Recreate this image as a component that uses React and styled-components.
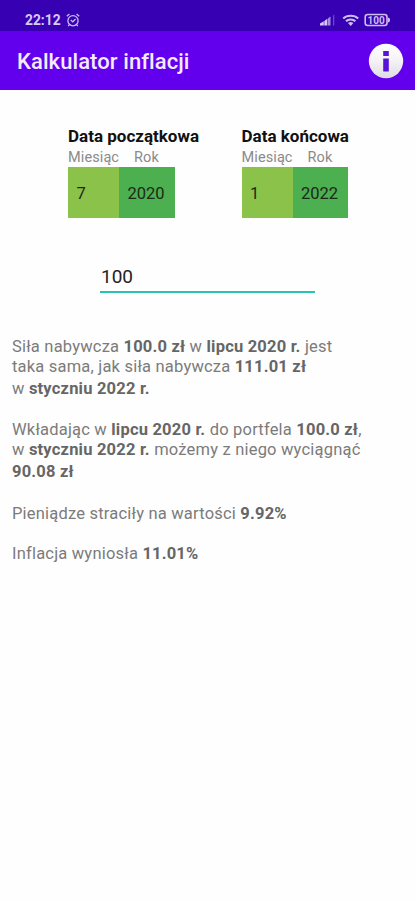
import styled, { createGlobalStyle } from "styled-components";

const App = () => {
  return (
    <Screen>
      <GlobalStyle />
      <StatusBar>
        <Time>22:12</Time>
        <AlarmIcon />
        <Spacer />
        <StatusIcons />
      </StatusBar>
      <Toolbar>
        <Title>Kalkulator inflacji</Title>
        <InfoIcon />
      </Toolbar>
      <Dates>
        <DatePicker title="Data początkowa" month="7" year="2020" />
        <DatePicker title="Data końcowa" month="1" year="2022" />
      </Dates>
      <AmountInput defaultValue="100" />
      <Results>
        <Line>
          Siła nabywcza <b>100.0 zł</b> w <b>lipcu 2020 r.</b> jest
        </Line>
        <Line>
          taka sama, jak siła nabywcza <b>111.01 zł</b>
        </Line>
        <Line $height={23}>
          w <b>styczniu 2022 r.</b>
        </Line>
        <Gap $height={20} />
        <Line>
          Wkładając w <b>lipcu 2020 r.</b> do portfela <b>100.0 zł</b>,
        </Line>
        <Line>
          w <b>styczniu 2022 r.</b> możemy z niego wyciągnąć
        </Line>
        <Line $height={23}>
          <b>90.08 zł</b>
        </Line>
        <Gap $height={21} />
        <Line>
          Pieniądze straciły na wartości <b>9.92%</b>
        </Line>
        <Gap $height={20} />
        <Line>
          Inflacja wyniosła <b>11.01%</b>
        </Line>
      </Results>
    </Screen>
  );
};

const DatePicker = ({ title, month, year }) => {
  return (
    <Picker>
      <PickerTitle>{title}</PickerTitle>
      <PickerLabels>
        <span>Miesiąc</span>
        <span>Rok</span>
      </PickerLabels>
      <PickerFields>
        <Field $color="#8bc34a">{month}</Field>
        <Field $color="#4caf50">{year}</Field>
      </PickerFields>
    </Picker>
  );
};

const AlarmIcon = () => (
  <Alarm viewBox="0 0 14 14" fill="none" stroke="#cdbdf3" strokeWidth="1.3">
    <circle cx="7" cy="7.7" r="5.1" />
    <path d="M0.8 3.2 3.4 1M13.2 3.2 10.6 1M4.8 7l2 1.9L9.5 6M3.4 11.6l-1.2 1.4M10.6 11.6l1.2 1.4" />
  </Alarm>
);

const StatusIcons = () => (
  <Signals viewBox="0 0 72 14" fill="none">
    <path d="M1 12.5v-2L4.8 8.3v4.2zM5.3 12.5V8L8.3 5.8v6.7z" fill="#d5c8f5" />
    <path d="M8.8 12.5V5.5l2.7-1.9v8.9z" fill="#a58ce0" />
    <path d="M14 12.5V2.5l1.3-1v11z" fill="#6a48c8" />
    <g stroke="#cdbdf3" strokeWidth="2.1">
      <path d="M24.2 5.4c3.8-3.6 11.2-3.6 15 0" />
      <path d="M27 8.3c2.5-2.4 6.9-2.4 9.4 0" />
    </g>
    <path d="M29 10c1.6-1.3 3.8-1.3 5.4 0l-2.7 3z" fill="#cdbdf3" />
    <rect x="46.2" y="1.5" width="21.8" height="11" rx="2.5" stroke="#cdbdf3" strokeWidth="1.6" />
    <path d="M69.5 4.9c1.3 0.5 1.3 3.8 0 4.3z" fill="#cdbdf3" stroke="#cdbdf3" />
    <BatteryText x="57.1" y="10.6" textAnchor="middle">
      100
    </BatteryText>
  </Signals>
);

const InfoIcon = () => (
  <Info viewBox="0 0 36 36">
    <defs>
      <linearGradient id="disc" x1="0" y1="0" x2="0" y2="1">
        <stop offset="0" stopColor="#ffffff" />
        <stop offset="0.5" stopColor="#f4f2f6" />
        <stop offset="1" stopColor="#dedce2" />
      </linearGradient>
    </defs>
    <circle cx="18" cy="18" r="17.2" fill="url(#disc)" />
    <path d="M15.2 8h5.6v5h-5.6zM15.2 15.500h5.6v13h-5.6z" fill="#5714d8" />
  </Info>
);

const GlobalStyle = createGlobalStyle`
  body {
    margin: 0;
    background: #fefefe;
  }

  * {
    box-sizing: border-box;
  }
`;

const Screen = styled.div`
  width: 415px;
  height: 900px;
  overflow: hidden;
  background: #fefefe;
  font-family: Roboto, sans-serif;
`;

const StatusBar = styled.div`
  display: flex;
  align-items: center;
  height: 31px;
  padding: 8px 24px 0 25px;
  background: #3700b3;
`;

const Time = styled.span`
  width: 41px;
  font-size: 13.8px;
  font-weight: 700;
  color: #d8ccf6;
`;

const Alarm = styled.svg`
  width: 14px;
  height: 14px;
`;

const Spacer = styled.div`
  flex: 1;
`;

const Signals = styled.svg`
  width: 72px;
  height: 14px;
`;

const BatteryText = styled.text`
  font-size: 10px;
  font-weight: 700;
  fill: #cdbdf3;
`;

const Toolbar = styled.div`
  display: flex;
  align-items: center;
  justify-content: space-between;
  height: 59px;
  padding: 0 11px 0 17px;
  background: #6200ee;
`;

const Title = styled.h1`
  margin: 2px 0 0;
  font-size: 22px;
  font-weight: 500;
  letter-spacing: 0.08px;
  color: #f3ebfe;
`;

const Info = styled.svg`
  width: 36px;
  height: 36px;
`;

const Dates = styled.div`
  display: grid;
  grid-template-columns: 173.5px 173.5px;
  padding: 36px 0 0 68px;
`;

const Picker = styled.div``;

const PickerTitle = styled.div`
  height: 23px;
  line-height: 20px;
  font-size: 17px;
  font-weight: 700;
  color: #111;
`;

const PickerLabels = styled.div`
  display: grid;
  grid-template-columns: 66px 41px;
  height: 18px;
  line-height: 18px;
  font-size: 14.5px;
  letter-spacing: 0.1px;
  color: #8a8a8a;
`;

const PickerFields = styled.div`
  display: grid;
  grid-template-columns: 51px 55.5px;
  height: 51px;
`;

const Field = styled.div`
  height: 51px;
  padding-left: 8.5px;
  line-height: 53px;
  font-size: 16.5px;
  color: #1c2a18;
  background: ${({ $color }) => $color};
`;

const AmountInput = styled.input`
  display: block;
  width: 215px;
  height: 35px;
  margin: 40px 0 0 100px;
  padding: 3px 1px 0;
  border: 0;
  border-bottom: 2px solid #27c4b5;
  outline: none;
  background: transparent;
  font-family: inherit;
  font-size: 19px;
  color: #222;
`;

const Results = styled.div`
  padding: 44px 0 0 12px;
`;

const Line = styled.div`
  height: ${({ $height }) => $height || 20}px;
  line-height: ${({ $height }) => $height || 20}px;
  white-space: nowrap;
  font-size: 16.5px;
  letter-spacing: 0.2px;
  color: #7b7b7b;

  b {
    font-weight: 700;
    color: #666;
  }
`;

const Gap = styled.div`
  height: ${({ $height }) => $height}px;
`;

export default App;
